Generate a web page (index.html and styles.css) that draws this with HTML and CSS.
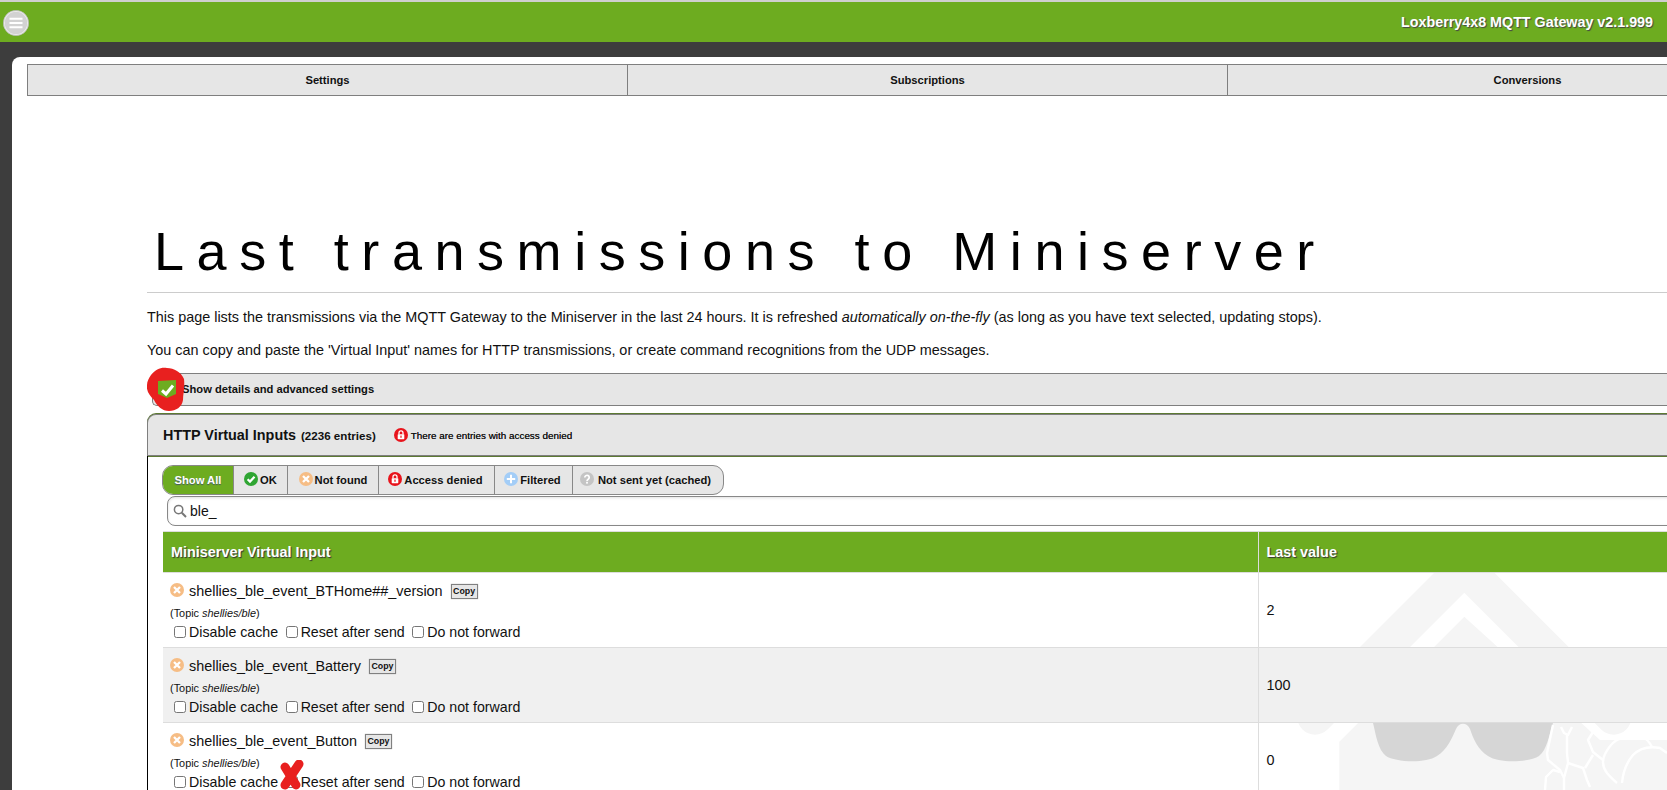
FILE: index.html
```html
<!DOCTYPE html>
<html lang="en">
<head>
  <meta charset="UTF-8" />
  <title>Loxberry4x8 MQTT Gateway</title>
  <link rel="stylesheet" href="styles.css">
</head>
<body>

  <svg width="0" height="0" class="defs">
    <symbol id="ico-ok" viewBox="0 0 14 14">
      <circle cx="7" cy="7" r="7" fill="#2fa533"/>
      <path d="M3.6 7.2 6 9.6 10.5 4.8" fill="none" stroke="#fff" stroke-width="2.2"/>
    </symbol>
    <symbol id="ico-notfound" viewBox="0 0 14 14">
      <circle cx="7" cy="7" r="7" fill="#f6bd85"/>
      <path d="M4 4 10 10M10 4 4 10" fill="none" stroke="#fff" stroke-width="2.3"/>
    </symbol>
    <symbol id="ico-lock" viewBox="0 0 14 14">
      <circle cx="7" cy="7" r="7" fill="#e8141c"/>
      <rect x="3.7" y="6.2" width="6.6" height="5" rx="0.6" fill="#fff"/>
      <path d="M5 6.4V4.8a2 2 0 0 1 4 0v1.6" fill="none" stroke="#fff" stroke-width="1.3"/>
      <rect x="6.4" y="7.6" width="1.2" height="2.2" fill="#e8141c"/>
    </symbol>
    <symbol id="ico-filtered" viewBox="0 0 14 14">
      <circle cx="7" cy="7" r="7" fill="#a3cdf7"/>
      <path d="M7 2.8V11.2M2.8 7H11.2" fill="none" stroke="#fff" stroke-width="2"/>
    </symbol>
    <symbol id="ico-cached" viewBox="0 0 14 14">
      <circle cx="7" cy="7" r="7" fill="#c4c4c4"/>
      <path d="M4.8 5.4a2.2 2.1 0 1 1 3.4 1.8C7.3 7.8 7 8.2 7 9" fill="none" stroke="#fff" stroke-width="1.7"/>
      <rect x="6.1" y="9.8" width="1.8" height="1.8" fill="#fff"/>
    </symbol>
  </svg>

  <header class="topbar">
    <button class="menu-btn">
      <svg width="26" height="26" viewBox="0 0 26 26">
        <circle cx="13" cy="13" r="12" fill="#d2d2d2" stroke="#f0f0f0" stroke-width="1.5"/>
        <circle cx="13" cy="13" r="12.6" fill="none" stroke="#a8a8a8" stroke-width="0.6"/>
        <path d="M6.5 8.8H19.5M6.5 13H19.5M6.5 17.3H19.5" stroke="#fff" stroke-width="2"/>
      </svg>
    </button>
    <div class="topbar-title">Loxberry4x8 MQTT Gateway v2.1.999</div>
  </header>

  <div class="page">
    <svg class="watermark" width="1655" height="733" viewBox="12 57 1655 733">
      <path d="M1315 717 1464.3 567.7 1613.7 717" fill="none" stroke="#f5f5f5" stroke-width="35.4" stroke-linecap="round" stroke-linejoin="miter"/>
      <path d="M1464.3 616.7 1339.3 741.7V790H1667V740H1600Z" fill="#f5f5f5"/>
      <path d="M1373 715H1553V723C1549 735 1547 750 1539 756 1530 762 1500 764 1488 756 1478 750 1473 738 1470 729 1467 722 1459 722 1456 729 1452 738 1447 750 1437 756 1425 764 1395 762 1386 756 1378 750 1376 735 1373 723Z" fill="#d6d6d6"/>
      <g fill="none" stroke="#fff" stroke-width="2.4" stroke-linejoin="round">
        <polyline points="1553,725 1547,753 1548,760 1560,770 1564,778 1564,790"/>
        <polyline points="1561,727 1564,733 1568,735 1572,727"/>
        <polyline points="1567,735 1567,753 1568,763 1564,778"/>
        <polyline points="1568,763 1583,768 1587,780 1590,787"/>
        <polyline points="1588,727 1593,732 1588,740 1593,752 1603,760"/>
        <polyline points="1585,768 1593,755"/>
        <path d="M1617 783C1608 775 1603 770 1603 762 1603 755 1610 744 1617 740 1625 736 1635 735 1640 735 1646 738 1650 743 1652 747"/>
        <polyline points="1640,725 1642,735"/>
        <path d="M1622 783C1623 772 1627 762 1633 755 1640 748 1650 746 1660 748L1667 753"/>
        <polyline points="1545,790 1546,777 1553,770 1560,772"/>
      </g>
    </svg>

    <nav class="tabs">
      <a class="tab">Settings</a>
      <a class="tab">Subscriptions</a>
      <a class="tab">Conversions</a>
    </nav>

    <main class="content">
      <h1>Last transmissions to Miniserver</h1>
      <hr>
      <p>This page lists the transmissions via the MQTT Gateway to the Miniserver in the last 24 hours. It is refreshed <em>automatically on-the-fly</em> (as long as you have text selected, updating stops).</p>
      <p>You can copy and paste the 'Virtual Input' names for HTTP transmissions, or create command recognitions from the UDP messages.</p>

      <div class="details-bar">Show details and advanced settings</div>

      <section class="panel">
        <div class="panel-head">
          <span class="panel-title">HTTP Virtual Inputs</span>
          <span class="panel-count">(2236 entries)</span>
          <svg class="ico panel-lock"><use href="#ico-lock"/></svg>
          <span class="panel-note">There are entries with access denied</span>
        </div>

        <div class="panel-body">
          <div class="filters">
            <a class="filter active">Show All</a>
            <a class="filter f-ok"><svg class="ico"><use href="#ico-ok"/></svg>OK</a>
            <a class="filter f-nf"><svg class="ico"><use href="#ico-notfound"/></svg>Not found</a>
            <a class="filter f-ad"><svg class="ico"><use href="#ico-lock"/></svg>Access denied</a>
            <a class="filter f-fi"><svg class="ico"><use href="#ico-filtered"/></svg>Filtered</a>
            <a class="filter f-ca"><svg class="ico"><use href="#ico-cached"/></svg>Not sent yet (cached)</a>
          </div>

          <div class="search">
            <svg width="14" height="14" viewBox="0 0 14 14">
              <circle cx="5.6" cy="5.6" r="4.2" fill="none" stroke="#777" stroke-width="1.5"/>
              <path d="M8.8 8.8 13 13" stroke="#777" stroke-width="2"/>
            </svg>
            <span>ble_</span>
          </div>

          <table class="vi-table">
            <thead>
              <tr>
                <th class="col-name">Miniserver Virtual Input</th>
                <th class="col-value">Last value</th>
              </tr>
            </thead>
            <tbody>
              <tr>
                <td>
                  <div class="vi-name"><svg class="ico"><use href="#ico-notfound"/></svg>shellies_ble_event_BTHome##_version <button class="copy">Copy</button></div>
                  <div class="topic">(Topic <em>shellies/ble</em>)</div>
                  <div class="flags">
                    <label><input type="checkbox">Disable cache</label>
                    <label><input type="checkbox">Reset after send</label>
                    <label><input type="checkbox">Do not forward</label>
                  </div>
                </td>
                <td>2</td>
              </tr>
              <tr class="even">
                <td>
                  <div class="vi-name"><svg class="ico"><use href="#ico-notfound"/></svg>shellies_ble_event_Battery <button class="copy">Copy</button></div>
                  <div class="topic">(Topic <em>shellies/ble</em>)</div>
                  <div class="flags">
                    <label><input type="checkbox">Disable cache</label>
                    <label><input type="checkbox">Reset after send</label>
                    <label><input type="checkbox">Do not forward</label>
                  </div>
                </td>
                <td>100</td>
              </tr>
              <tr>
                <td>
                  <div class="vi-name"><svg class="ico"><use href="#ico-notfound"/></svg>shellies_ble_event_Button <button class="copy">Copy</button></div>
                  <div class="topic">(Topic <em>shellies/ble</em>)</div>
                  <div class="flags">
                    <label><input type="checkbox">Disable cache</label>
                    <label><input type="checkbox">Reset after send</label>
                    <label><input type="checkbox">Do not forward</label>
                  </div>
                </td>
                <td>0</td>
              </tr>
            </tbody>
          </table>
        </div>
      </section>
    </main>

    <!-- hand drawn marks on top of the screenshot -->
    <svg class="mark mark-check" width="40" height="46" viewBox="0 0 40 46">
      <path d="M4 8C9 2 14 0 20 1 27 1 34 5 37 12 38 20 36 27 36 33 35 40 29 44 22 44 15 44 10 39 7 33 3 29-1 24 0 18 0 14 2 11 4 8Z" fill="#e8201f"/>
      <path d="M11 14 29 13V27L20 31 11 27Z" fill="#6dac20"/>
      <path d="M15 23.5 19 27 26 18.5" fill="none" stroke="#fff" stroke-width="3"/>
    </svg>
    <svg class="mark mark-cross" width="24" height="30" viewBox="0 0 24 30">
      <path d="M19 4 5 25M5 7 16 25" fill="none" stroke="#e8201f" stroke-width="9" stroke-linecap="round"/>
    </svg>
  </div>

</body>
</html>
```

FILE: styles.css
```css
* {
  box-sizing: border-box;
}

html, body {
  height: 790px;
  overflow: hidden;
}

body {
  margin: 0;
  background: #3d3d3d;
  font-family: "Liberation Sans", Arial, sans-serif;
  font-size: 14.4px;
  color: #111;
}

.defs {
  position: absolute;
}

.topbar {
  height: 42px;
  border-top: 2px solid #cfcfcf;
  background: #6dac20;
  display: flex;
  align-items: center;
  justify-content: space-between;
  padding: 0 14px 0 3px;
}

.menu-btn {
  border: none;
  background: none;
  padding: 0;
  width: 26px;
  height: 26px;
  margin-top: 1px;
}

.topbar-title {
  color: #fff;
  font-weight: bold;
  font-size: 14.3px;
  text-shadow: 1px 1px 1px #444;
}

.page {
  position: relative;
  width: 1830px;
  height: 733px;
  margin: 15px 0 0 12px;
  background: #fff;
  border-top-left-radius: 8px;
}

.watermark {
  position: absolute;
  left: 0;
  top: 0;
}

.tabs {
  position: relative;
  display: flex;
  width: 1801px;
  margin-left: 15px;
  padding-top: 7px;
}

.tab {
  flex: 1;
  height: 32px;
  line-height: 31px;
  text-align: center;
  font-size: 11.2px;
  font-weight: bold;
  background: #e6e6e6;
  border: 1px solid #7f7f7f;
  border-left-width: 0;
}

.tab:first-child {
  border-left-width: 1px;
}

.content {
  position: relative;
  margin-left: 135px;
}

h1 {
  margin: 124px 0 0;
  font-size: 54px;
  line-height: 62px;
  font-weight: normal;
  letter-spacing: 12.55px;
  padding-left: 7px;
  color: #000;
  white-space: nowrap;
}

hr {
  height: 1px;
  margin: 10px 0 0;
  border: none;
  background: #ccc;
}

p {
  margin: 16px 0 0;
  line-height: 17px;
}

.details-bar {
  margin: 14px 0 0 5px;
  height: 33px;
  line-height: 30px;
  padding-left: 29px;
  font-size: 11.2px;
  font-weight: bold;
  background: #e6e6e6;
  border: 1px solid #7f7f7f;
  border-right: none;
  border-radius: 5px 0 0 5px;
}

.panel {
  margin-top: 8px;
}

.panel-head {
  height: 42px;
  display: flex;
  align-items: center;
  padding-left: 15px;
  background: #e6e6e6;
  border: 1px solid #7f7f7f;
  border-right: none;
  border-radius: 9px 0 0 0;
  box-shadow: 0 -1px 0 #5d7a33, 0 1px 0 #5d7a33;
}

.panel-title {
  font-size: 14.4px;
  font-weight: bold;
}

.panel-count {
  margin-left: 5px;
  font-size: 11.6px;
  font-weight: bold;
}

.panel-lock {
  margin-left: 18px;
  margin-right: 3px;
}

.panel-note {
  font-size: 9.9px;
  text-shadow: 0 0 0.6px #333;
}

.ico {
  width: 14px;
  height: 14px;
  flex: none;
}

.panel-body {
  border-left: 1px solid #000;
  padding: 9px 0 0 14px;
  height: 400px;
}

.filters {
  display: inline-flex;
  height: 30px;
  border: 1px solid #888;
  border-radius: 11px;
  background: #e6e6e6;
  overflow: hidden;
}

.filter {
  display: flex;
  align-items: center;
  justify-content: center;
  gap: 2px;
  font-size: 11.2px;
  font-weight: bold;
  border-left: 1px solid #888;
}

.filter .ico {
  margin-top: -2px;
}

.filter.active {
  width: 70px;
  border-left: none;
  background: #6dac20;
  color: #fff;
  text-shadow: 0 1px 1px #456;
}

.f-ok { width: 54px; }
.f-nf { width: 91px; }
.f-ad { width: 116px; padding-right: 2px; }
.f-fi { width: 78px; padding-right: 2px; }
.f-ca { width: 151px; gap: 4px; padding-right: 5px; }

.search {
  display: flex;
  align-items: center;
  gap: 3px;
  width: 1700px;
  height: 30px;
  margin: 1px 0 0 5px;
  padding-left: 5px;
  font-size: 14px;
  border: 1px solid #888;
  border-radius: 8px 0 0 8px;
  box-shadow: inset 0 1px 3px rgba(0,0,0,0.12);
  background: rgba(255,255,255,0.9);
}

.vi-table {
  position: relative;
  margin: 5px 0 0 1px;
  width: 1700px;
  table-layout: fixed;
  border-collapse: collapse;
}

.vi-table th {
  height: 41px;
  padding: 0 7px 1px 8px;
  text-align: left;
  font-size: 14.4px;
  background: #6dac20;
  color: #fff;
  text-shadow: 1px 1px 1px #333;
  border-top: 1px solid #ddd;
  border-left: 1px solid #ddd;
  border-bottom: 1px solid #ddd;
}

.vi-table th:first-child {
  border-left: none;
}

.col-name {
  width: 1095px;
}

.vi-table td {
  height: 75px;
  padding: 8px 8px 0;
  vertical-align: top;
  border-bottom: 1px solid #ddd;
  border-left: 1px solid #ddd;
}

.vi-table td:first-child {
  padding-left: 7px;
  border-left: none;
}

.vi-table tr.even td {
  background: #f0f0f0;
}

.vi-table td + td {
  padding-top: 0;
  vertical-align: middle;
}

.vi-name {
  display: flex;
  align-items: center;
  gap: 4px;
  height: 20px;
  white-space: pre;
}

.vi-name .ico {
  margin-top: -3px;
  margin-right: 1px;
}

.copy {
  width: 27px;
  height: 15px;
  padding: 0;
  border: 1px solid #808080;
  background: #e6e6e6;
  color: #111;
  font-family: inherit;
  font-size: 8.8px;
  font-weight: bold;
  box-shadow: 0 0 1px #aaa;
}

.topic {
  margin: 4px 0 0;
  font-size: 10.9px;
  line-height: 16px;
}

.flags {
  display: flex;
  gap: 4.5px;
  height: 19px;
  align-items: center;
  margin: 1px 0 0 1px;
  font-size: 14.2px;
}

.flags label {
  display: flex;
  align-items: center;
}

.flags input {
  appearance: none;
  width: 12px;
  height: 12px;
  margin: 0 3px 0 3px;
  background: #fff;
  border: 1px solid #767676;
  border-radius: 2.5px;
}

.mark {
  position: absolute;
}

.mark-check {
  left: 135px;
  top: 310px;
}

.mark-cross {
  left: 268px;
  top: 703px;
}
```
